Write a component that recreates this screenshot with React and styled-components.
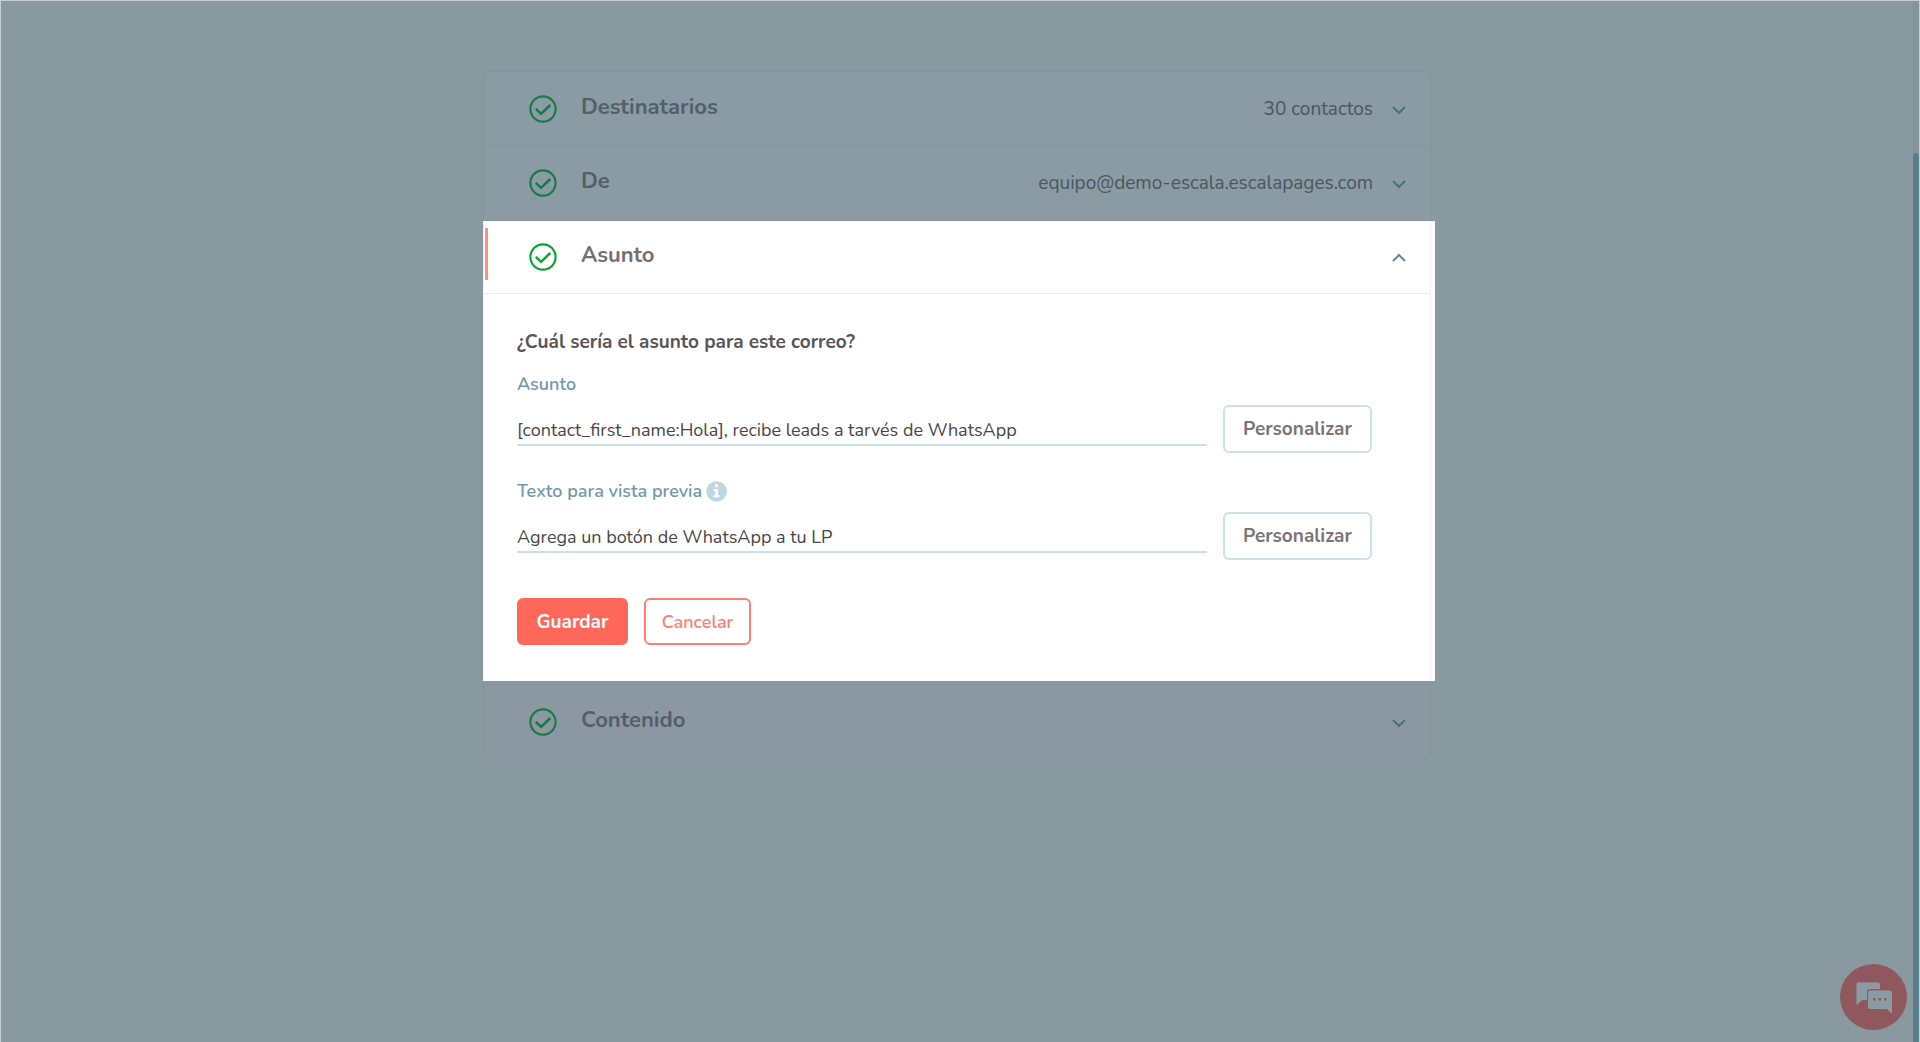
import React, { useState } from "react";
import styled, { createGlobalStyle } from "styled-components";

const GlobalStyle = createGlobalStyle`
  * {
    box-sizing: border-box;
  }

  body {
    margin: 0;
    background: #8899a0;
    font-family: Nunito, "Open Sans", "Noto Sans", sans-serif;
  }

  button, input {
    font-family: inherit;
  }
`;

const Page = styled.div`
  display: flex;
  min-height: 100vh;
  border: 1px solid #c3ccd0;
  border-width: 1px 1px 0 1px;
`;

const Main = styled.main`
  flex: 1;
  padding: 70px 24px;
`;

const ScrollTrack = styled.div`
  display: flex;
  width: 6px;
  padding-top: 152px;
  background: #84959c;
`;

const ScrollThumb = styled.div`
  flex: 1;
  border-radius: 3px 3px 0 0;
  background: #5a7d8c;
`;

const Accordion = styled.div`
  max-width: 948px;
  margin: 0 auto;
`;

const Row = styled.button`
  display: flex;
  align-items: center;
  width: 100%;
  height: 75px;
  padding: 0 24px 0 45px;
  border: 1px solid #82949c;
  border-top-width: ${props => (props.$joined ? "0" : "1px")};
  border-radius: ${props => props.$radius || "0"};
  background: ${props => props.$background || "#8b9ba3"};
  color: #50606a;
  text-align: left;
  cursor: pointer;
`;

const Title = styled.span`
  flex: 1;
  padding: 0 0 4px 24px;
  font-size: 22px;
  line-height: 28px;
  font-weight: 700;
`;

const Summary = styled.span`
  margin-right: 19px;
  color: #485761;
  font-size: 19px;
  line-height: 24px;
`;

const Spotlight = styled.section`
  margin: 0 -4px 3px 0;
  padding-right: 4px;
  background: #ffffff;
`;

const Panel = styled.div`
  border: 1px solid #eef1f5;
  border-width: 0 1px;
`;

const PanelHeader = styled.button`
  position: relative;
  display: flex;
  align-items: center;
  width: 100%;
  height: 73px;
  padding: 0 24px 0 45px;
  border: 0;
  border-bottom: 1px solid #e9eef3;
  background: #ffffff;
  color: #757071;
  text-align: left;
  cursor: pointer;

  &::before {
    content: "";
    position: absolute;
    top: 7px;
    left: 1px;
    width: 3px;
    height: 52px;
    background: #ff8d84;
  }
`;

const Form = styled.form`
  padding: 36px 58px 36px 33px;
`;

const Question = styled.h2`
  margin: 0 0 18px;
  color: #5a5657;
  font-size: 19px;
  line-height: 24px;
  font-weight: 700;
`;

const Field = styled.div`
  margin-bottom: 26px;
`;

const LabelRow = styled.div`
  display: flex;
  align-items: center;
  gap: 4px;
  margin-bottom: 9px;
`;

const Label = styled.label`
  color: #719aaa;
  font-size: 18px;
  line-height: 24px;
  font-weight: 600;
`;

const Controls = styled.div`
  display: flex;
  align-items: center;
  gap: 16px;
`;

const TextInput = styled.input`
  flex: 1;
  min-width: 0;
  height: 34px;
  padding: 4px 0 0;
  border: 0;
  border-bottom: 2px solid #cbe1e9;
  outline: 0;
  background: transparent;
  color: #4a4546;
  font-size: 18px;
`;

const OutlineButton = styled.button`
  width: 149px;
  height: 48px;
  padding: 0;
  border: 2px solid #cbe2ea;
  border-radius: 6px;
  background: #ffffff;
  color: #7b7576;
  font-size: 19px;
  font-weight: 700;
  cursor: pointer;
`;

const Actions = styled.div`
  display: flex;
  gap: 16px;
  padding-top: 12px;
`;

const ActionButton = styled.button`
  width: ${props => (props.$primary ? "111px" : "107px")};
  height: 47px;
  padding: 0;
  border: 2px solid ${props => (props.$primary ? "#ff675b" : "#ff7d72")};
  border-radius: 6px;
  background: ${props => (props.$primary ? "#ff675b" : "#ffffff")};
  color: ${props => (props.$primary ? "#ffffff" : "#ff7d72")};
  font-size: ${props => (props.$primary ? "19px" : "18px")};
  font-weight: ${props => (props.$primary ? "700" : "600")};
  cursor: pointer;
`;

const ChatButton = styled.button`
  position: fixed;
  right: 13px;
  bottom: 12px;
  width: 67px;
  height: 66px;
  padding: 0;
  border: 0;
  border-radius: 50%;
  background: #8f585c;
  cursor: pointer;

  svg {
    display: block;
  }
`;

const CheckIcon = ({ color = "#167a44" }) => (
  <svg width="28" height="28" viewBox="0 0 28 28" fill="none" stroke={color}>
    <circle cx="14" cy="14" r="12.6" strokeWidth="2.1" />
    <path d="M6.8 13.8l5.3 5 9.2-8.8" strokeWidth="2.5" />
  </svg>
);

const ChevronIcon = ({ up, color = "#47707d" }) => (
  <svg width="14" height="14" viewBox="0 0 14 14" fill="none" stroke={color} strokeWidth="2">
    <path d={up ? "M1 11l6-6 6 6" : "M1 5l6 6 6-6"} />
  </svg>
);

const InfoIcon = () => (
  <svg width="21" height="21" viewBox="0 0 21 21">
    <circle cx="10.5" cy="10.5" r="10.3" fill="#bcd7e2" />
    <path
      d="M9 3.2h3v2.9H9zM7.4 8h4.7v6.2h1.5v2H7.4v-2H9V10H7.4z"
      fill="#ffffff"
    />
  </svg>
);

const ChatIcon = () => (
  <svg width="67" height="66" viewBox="0 0 67 66">
    <path
      d="M18 18.500h20a2 2 0 0 1 2 2V25H30a3 3 0 0 0-3 3v8h-4c-2 0-3.500 3-6.500 5V20a1.500 1.500 0 0 1 1.500-1.500z"
      fill="#8b9ba3"
    />
    <path
      d="M30 26.500h20a2 2 0 0 1 2 2V49.500c-2.500-1-3.500-4.500-5.500-4.500H30a2 2 0 0 1-2-2V28.500a2 2 0 0 1 2-2z"
      fill="#8b9ba3"
    />
    <path d="M33 34h2.500v2.500H33zM38.500 34H41v2.500h-2.500zM44 34h2.500v2.500H44z" fill="#8f585c" />
  </svg>
);

function SectionRow({ title, summary, ...rest }) {
  return (
    <Row type="button" aria-expanded="false" {...rest}>
      <CheckIcon />
      <Title>{title}</Title>
      {summary && <Summary>{summary}</Summary>}
      <ChevronIcon />
    </Row>
  );
}

function PersonalizedField({ id, label, info, value, onChange }) {
  return (
    <Field>
      <LabelRow>
        <Label htmlFor={id}>{label}</Label>
        {info && <InfoIcon />}
      </LabelRow>
      <Controls>
        <TextInput
          id={id}
          type="text"
          spellCheck="false"
          value={value}
          onChange={e => onChange(e.target.value)}
        />
        <OutlineButton type="button">Personalizar</OutlineButton>
      </Controls>
    </Field>
  );
}

export default function App() {
  const [subject, setSubject] = useState(
    "[contact_first_name:Hola], recibe leads a tarvés de WhatsApp"
  );
  const [preview, setPreview] = useState("Agrega un botón de WhatsApp a tu LP");

  return (
    <>
      <GlobalStyle />
      <Page>
        <Main>
          <Accordion>
            <SectionRow title="Destinatarios" summary="30 contactos" $radius="6px 6px 0 0" />
            <SectionRow title="De" summary="equipo@demo-escala.escalapages.com" $joined />
            <Spotlight>
              <Panel>
                <PanelHeader type="button" aria-expanded="true">
                  <CheckIcon color="#0aa22f" />
                  <Title>Asunto</Title>
                  <ChevronIcon up color="#628998" />
                </PanelHeader>
                <Form onSubmit={e => e.preventDefault()}>
                  <Question>¿Cuál sería el asunto para este correo?</Question>
                  <PersonalizedField
                    id="subject"
                    label="Asunto"
                    value={subject}
                    onChange={setSubject}
                  />
                  <PersonalizedField
                    id="preview"
                    label="Texto para vista previa"
                    info
                    value={preview}
                    onChange={setPreview}
                  />
                  <Actions>
                    <ActionButton type="submit" $primary>
                      Guardar
                    </ActionButton>
                    <ActionButton type="button">Cancelar</ActionButton>
                  </Actions>
                </Form>
              </Panel>
            </Spotlight>
            <SectionRow title="Contenido" $radius="0 0 6px 6px" $background="#8c98a1" />
          </Accordion>
        </Main>
        <ScrollTrack>
          <ScrollThumb />
        </ScrollTrack>
      </Page>
      <ChatButton type="button" aria-label="Chat">
        <ChatIcon />
      </ChatButton>
    </>
  );
}
